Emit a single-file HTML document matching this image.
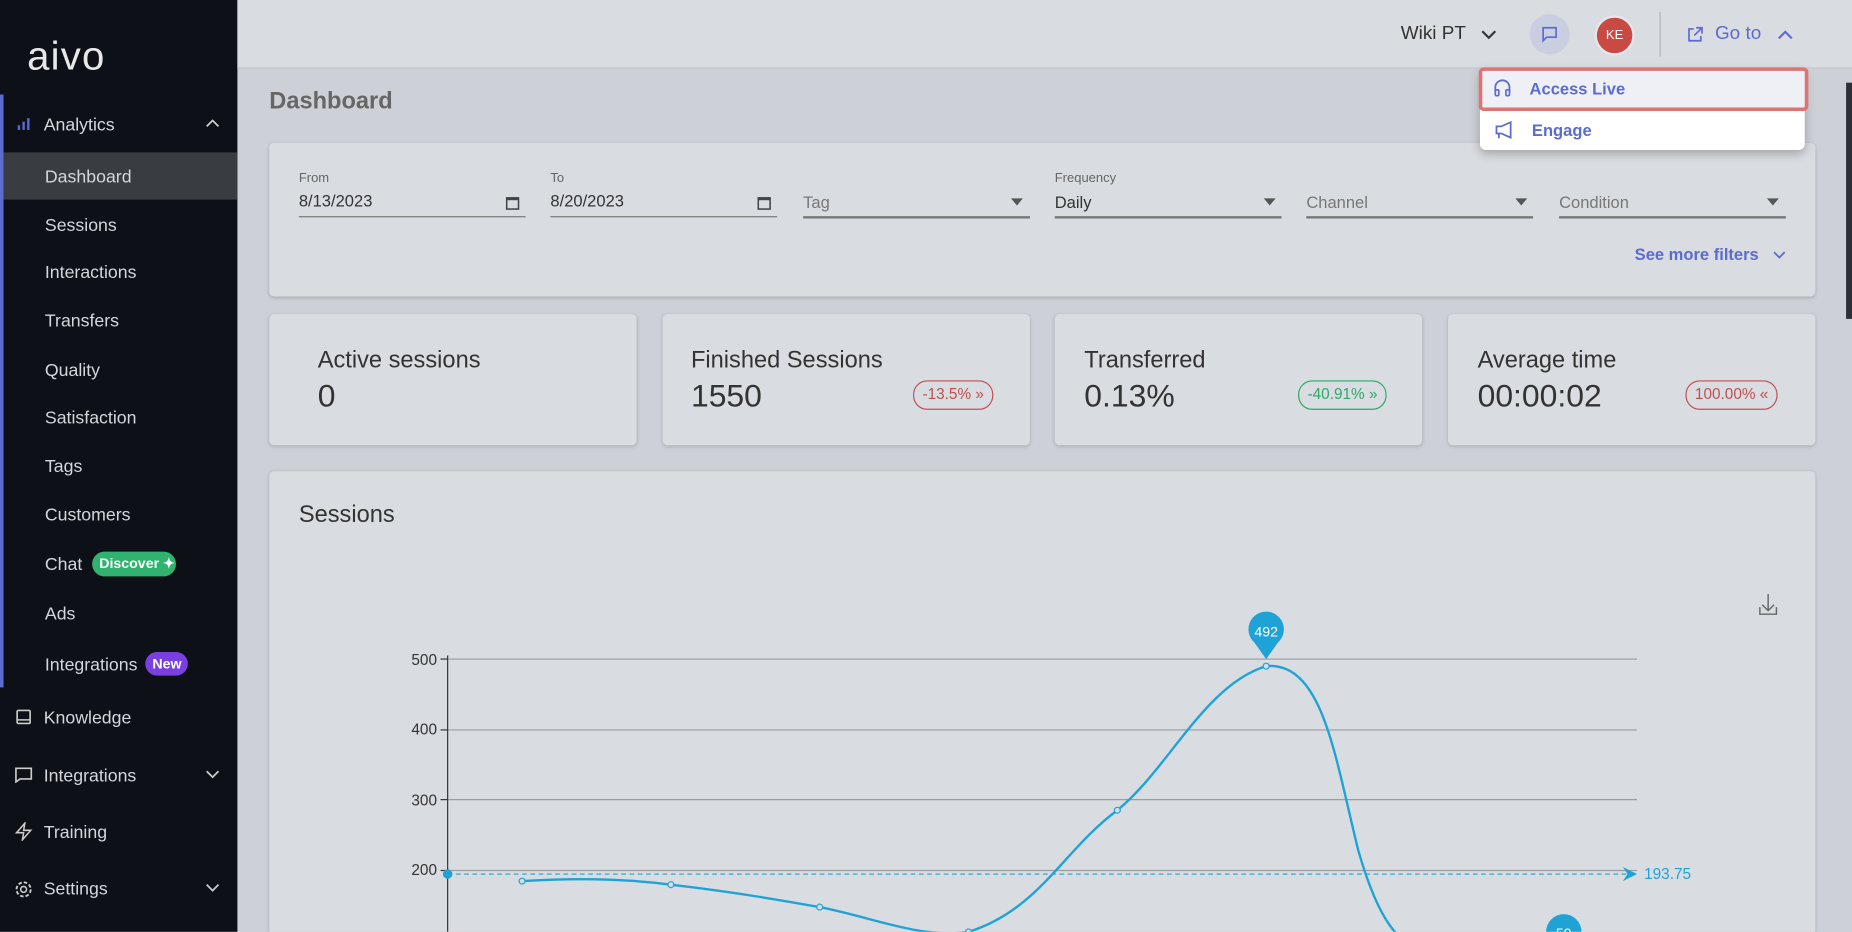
<!DOCTYPE html>
<html><head><meta charset="utf-8"><style>
*{box-sizing:border-box;margin:0;padding:0}
html,body{width:1852px;height:932px;overflow:hidden;background:#cdd1d7;font-family:"Liberation Sans",sans-serif}
#w{position:absolute;left:0;top:0;width:1568px;height:789px;transform:scale(1.18112);transform-origin:0 0;overflow:hidden;background:#cdd1d7}
.a{position:absolute}
#sb{left:0;top:0;width:201px;height:789px;background:#0d1117;color:#d4d6da}
.si{position:absolute;left:38px;font-size:15px;color:#d4d6da;transform:translateY(-50%)}
.mi{position:absolute;left:37px;font-size:15px;color:#d4d6da;transform:translateY(-50%)}
.ic{position:absolute;left:12px;transform:translateY(-50%)}
.card{position:absolute;background:#d9dce0;border-radius:4px;box-shadow:0 1px 3px rgba(0,0,0,.18)}
.fl{position:absolute;font-size:11px;color:#666}
.fv{position:absolute;font-size:14px;color:#333}
.fu{position:absolute;height:1px;background:#777}
.st{position:absolute;font-size:20px;color:#333}
.sv{position:absolute;font-size:27px;color:#333;font-weight:300}
.bd{position:absolute;font-size:13px;border:1px solid;border-radius:12px;padding:3px 7px;height:25px}
</style></head><body><div id="w">
<div id="sb" class="a">
 <div class="a" style="left:23px;top:29px;font-size:34px;color:#e8e8e8;letter-spacing:1px">aivo</div>
 <div class="a" style="left:0;top:80px;width:3px;height:502px;background:#5b6bd0"></div>
 <svg class="a" style="left:14px;top:99px" width="12" height="12"><rect x="1" y="7" width="2" height="4" fill="#5b6bd0"/><rect x="5" y="4" width="2" height="7" fill="#5b6bd0"/><rect x="9" y="1" width="2" height="10" fill="#5b6bd0"/></svg>
 <div class="mi" style="top:106px">Analytics</div>
 <svg class="a" style="left:174px;top:101px" width="12" height="8"><path d="M1 6L6 1L11 6" stroke="#ccc" fill="none" stroke-width="1.5"/></svg>
 <div class="a" style="left:3px;top:129px;width:198px;height:40px;background:#393c41"></div>
 <div class="si" style="top:150px">Dashboard</div>
 <div class="si" style="top:191px">Sessions</div>
 <div class="si" style="top:231px">Interactions</div>
 <div class="si" style="top:272px">Transfers</div>
 <div class="si" style="top:314px">Quality</div>
 <div class="si" style="top:354px">Satisfaction</div>
 <div class="si" style="top:395px">Tags</div>
 <div class="si" style="top:436px">Customers</div>
 <div class="si" style="top:478px">Chat</div>
 <div class="a" style="left:78px;top:467px;width:71px;height:21px;background:#2fb36e;border-radius:11px;color:#fff;font-size:12px;font-weight:bold;padding:3px 0 0 6px">Discover ✦</div>
 <div class="si" style="top:520px">Ads</div>
 <div class="si" style="top:563px">Integrations</div>
 <div class="a" style="left:123px;top:552px;width:36px;height:20px;background:#7a3fe0;border-radius:10px;color:#fff;font-size:12px;font-weight:bold;padding:3px 0 0 6px">New</div>
 <svg class="a" style="left:13px;top:600px" width="14" height="14"><rect x="1.5" y="1.5" width="11" height="11" rx="1" stroke="#ccc" fill="none" stroke-width="1.4"/><line x1="1.5" y1="9.5" x2="12.5" y2="9.5" stroke="#ccc" stroke-width="1.2"/></svg>
 <div class="mi" style="top:608px">Knowledge</div>
 <svg class="a" style="left:12px;top:649px" width="16" height="14"><path d="M1.5 1.5H14.5V10.5H5L1.5 13Z" stroke="#ccc" fill="none" stroke-width="1.4"/></svg>
 <div class="mi" style="top:657px">Integrations</div>
 <svg class="a" style="left:174px;top:652px" width="12" height="8"><path d="M1 1L6 6L11 1" stroke="#ccc" fill="none" stroke-width="1.5"/></svg>
 <svg class="a" style="left:12px;top:696px" width="16" height="16"><path d="M9 1L2 9H8L7 15L14 7H8Z" stroke="#ccc" fill="none" stroke-width="1.3"/></svg>
 <div class="mi" style="top:705px">Training</div>
 <svg class="a" style="left:12px;top:745px" width="16" height="16"><circle cx="8" cy="8" r="2.5" stroke="#ccc" fill="none" stroke-width="1.3"/><circle cx="8" cy="8" r="6" stroke="#ccc" fill="none" stroke-width="1.6" stroke-dasharray="3 1.7"/></svg>
 <div class="mi" style="top:753px">Settings</div>
 <svg class="a" style="left:174px;top:748px" width="12" height="8"><path d="M1 1L6 6L11 1" stroke="#ccc" fill="none" stroke-width="1.5"/></svg>
</div>
<!-- header -->
<div class="a" style="left:201px;top:0;width:1367px;height:58px;background:#d9dce0;border-bottom:1px solid #c5c8cd"></div>
<div class="a" style="left:1186px;top:20px;font-size:16px;color:#333">Wiki PT</div>
<svg class="a" style="left:1254px;top:25px" width="13" height="9"><path d="M1 1.5L6.5 7L12 1.5" stroke="#333" fill="none" stroke-width="1.8"/></svg>
<div class="a" style="left:1295px;top:12px;width:34px;height:34px;border-radius:50%;background:#c9cee0"></div>
<svg class="a" style="left:1305px;top:22px" width="14" height="14"><path d="M1.5 1.5H12.5V9.5H4.5L1.5 12.5Z" stroke="#5b6bd0" fill="none" stroke-width="1.4"/></svg>
<div class="a" style="left:1350px;top:13px;width:34px;height:34px;border-radius:50%;background:#c94a42;border:2px solid #e6e6ee;color:#fff;font-size:11px;text-align:center;line-height:30px">KE</div>
<div class="a" style="left:1405px;top:10px;width:1px;height:38px;background:#b0b3b8"></div>
<svg class="a" style="left:1428px;top:22px" width="14" height="14"><path d="M6 2.5H2V12.5H12V8.5M8 1.5H13V6.5M13 1.5L6.5 8" stroke="#5b6bd0" fill="none" stroke-width="1.4"/></svg>
<div class="a" style="left:1452px;top:20px;font-size:16px;color:#5b6bd0">Go to</div>
<svg class="a" style="left:1505px;top:25px" width="13" height="9"><path d="M1 7.5L6.5 2L12 7.5" stroke="#5b6bd0" fill="none" stroke-width="1.8"/></svg>
<!-- dashboard title -->
<div class="a" style="left:228px;top:75px;font-size:20px;font-weight:bold;color:#666">Dashboard</div>
<!-- filter card -->
<div class="card" style="left:228px;top:121px;width:1309px;height:130px">
 <div class="fl" style="left:25px;top:24px">From</div><div class="fv" style="left:25px;top:41px">8/13/2023</div>
 <svg class="a" style="left:200px;top:45px" width="12" height="12"><rect x="1" y="1.5" width="10" height="9.5" stroke="#444" fill="none" stroke-width="1.3"/><rect x="1" y="1.5" width="10" height="2" fill="#444"/></svg>
 <div class="fu" style="left:25px;top:62px;width:192px"></div>
 <div class="fl" style="left:238px;top:24px">To</div><div class="fv" style="left:238px;top:41px">8/20/2023</div>
 <svg class="a" style="left:413px;top:45px" width="12" height="12"><rect x="1" y="1.5" width="10" height="9.5" stroke="#444" fill="none" stroke-width="1.3"/><rect x="1" y="1.5" width="10" height="2" fill="#444"/></svg>
 <div class="fu" style="left:238px;top:62px;width:192px"></div>
 <div class="fv" style="left:452px;top:42px;color:#777">Tag</div>
 <div class="a" style="left:628px;top:47px;border:5px solid transparent;border-top:6px solid #555"></div>
 <div class="fu" style="left:452px;top:62px;width:192px;height:2px"></div>
 <div class="fl" style="left:665px;top:24px">Frequency</div><div class="fv" style="left:665px;top:42px">Daily</div>
 <div class="a" style="left:842px;top:47px;border:5px solid transparent;border-top:6px solid #555"></div>
 <div class="fu" style="left:665px;top:62px;width:192px;height:2px"></div>
 <div class="fv" style="left:878px;top:42px;color:#777">Channel</div>
 <div class="a" style="left:1055px;top:47px;border:5px solid transparent;border-top:6px solid #555"></div>
 <div class="fu" style="left:878px;top:62px;width:192px;height:2px"></div>
 <div class="fv" style="left:1092px;top:42px;color:#777">Condition</div>
 <div class="a" style="left:1268px;top:47px;border:5px solid transparent;border-top:6px solid #555"></div>
 <div class="fu" style="left:1092px;top:62px;width:192px;height:2px"></div>
 <div class="a" style="left:1156px;top:86px;font-size:14px;font-weight:bold;color:#5b6bd0">See more filters</div>
 <svg class="a" style="left:1273px;top:91px" width="11" height="8"><path d="M1 1.5L5.5 6L10 1.5" stroke="#5b6bd0" fill="none" stroke-width="1.5"/></svg>
</div>
<!-- stat cards -->
<div class="card" style="left:228px;top:266px;width:311px;height:111px"><div class="st" style="left:41px;top:28px">Active sessions</div><div class="sv" style="left:41px;top:54px">0</div></div>
<div class="card" style="left:561px;top:266px;width:311px;height:111px"><div class="st" style="left:24px;top:28px">Finished Sessions</div><div class="sv" style="left:24px;top:54px">1550</div><div class="bd" style="left:212px;top:56px;color:#c05050;border-color:#c05050">-13.5% »</div></div>
<div class="card" style="left:893px;top:266px;width:311px;height:111px"><div class="st" style="left:25px;top:28px">Transferred</div><div class="sv" style="left:25px;top:54px">0.13%</div><div class="bd" style="left:206px;top:56px;color:#2fa868;border-color:#2fa868">-40.91% »</div></div>
<div class="card" style="left:1226px;top:266px;width:311px;height:111px"><div class="st" style="left:25px;top:28px">Average time</div><div class="sv" style="left:25px;top:54px">00:00:02</div><div class="bd" style="left:201px;top:56px;color:#c05050;border-color:#c05050">100.00% «</div></div>
<!-- sessions chart -->
<div class="card" style="left:228px;top:399px;width:1309px;height:420px"><div class="a" style="left:25px;top:26px;font-size:20px;color:#333">Sessions</div></div>
<svg class="a" style="left:0;top:0" width="1568" height="789">
 <g stroke="#9a9da2" stroke-width="1"><line x1="379" y1="558" x2="1386" y2="558"/><line x1="379" y1="618" x2="1386" y2="618"/><line x1="379" y1="677" x2="1386" y2="677"/><line x1="379" y1="737" x2="1386" y2="737"/></g>
 <line x1="379" y1="555" x2="379" y2="789" stroke="#333" stroke-width="1"/>
 <g stroke="#333"><line x1="373" y1="558" x2="379" y2="558"/><line x1="373" y1="618" x2="379" y2="618"/><line x1="373" y1="677" x2="379" y2="677"/><line x1="373" y1="737" x2="379" y2="737"/></g>
 <g font-family="Liberation Sans" font-size="13" fill="#333" text-anchor="end"><text x="370" y="563">500</text><text x="370" y="622">400</text><text x="370" y="682">300</text><text x="370" y="741">200</text></g>
 <line x1="379" y1="740" x2="1380" y2="740" stroke="#1fa3d6" stroke-width="1" stroke-dasharray="4 3"/>
 <path d="M1374 734L1386 740L1374 746L1378 740Z" fill="#1fa3d6"/>
 <text x="1392" y="744" font-family="Liberation Sans" font-size="13" fill="#1fa3d6">193.75</text>
 <circle cx="379" cy="740" r="4" fill="#1fa3d6"/>
 <path d="M442 746C490 743 530 744 568 749C620 755 660 762 694 768C740 777 780 795 820 789C880 770 900 720 946 686C990 650 1020 580 1072 564C1120 560 1130 640 1150 720C1170 790 1190 800 1200 800" stroke="#1fa3d6" fill="none" stroke-width="2"/>
 <g fill="#d9dce0" stroke="#1fa3d6" stroke-width="1"><circle cx="442" cy="746" r="2.5"/><circle cx="568" cy="749" r="2.5"/><circle cx="694" cy="768" r="2.5"/><circle cx="820" cy="789" r="2.5"/><circle cx="946" cy="686" r="2.5"/><circle cx="1072" cy="564" r="2.5"/></g>
 <path d="M1072 558L1062 544A15 15 0 1 1 1082 544Z" fill="#1fa3d6"/>
 <text x="1072" y="539" font-family="Liberation Sans" font-size="12" fill="#fff" text-anchor="middle">492</text>
 <circle cx="1324" cy="789" r="15" fill="#1fa3d6"/>
 <text x="1324" y="794" font-family="Liberation Sans" font-size="12" fill="#fff" text-anchor="middle">59</text>
 <path d="M1497 503V517M1492 512L1497 517L1502 512M1490 514V520H1504V514" stroke="#666" fill="none" stroke-width="1.2"/>
</svg>
<!-- scrollbar -->
<div class="a" style="left:1563px;top:70px;width:5px;height:200px;background:#2b2f36"></div>
<!-- dropdown -->
<div class="a" style="left:1253px;top:58px;width:275px;height:69px;background:#fff;border-radius:5px;box-shadow:0 3px 8px rgba(0,0,0,.25)"></div>
<div class="a" style="left:1252px;top:57px;width:279px;height:37px;background:#eef0f6;border:3px solid #df7272;border-radius:4px"></div>
<svg class="a" style="left:1264px;top:67px" width="16" height="16"><path d="M2 11V7A6 6 0 0 1 14 7V11" stroke="#5b6bd0" fill="none" stroke-width="1.5"/><rect x="2" y="9" width="3" height="5" rx="1" stroke="#5b6bd0" fill="none" stroke-width="1.4"/><rect x="11" y="9" width="3" height="5" rx="1" stroke="#5b6bd0" fill="none" stroke-width="1.4"/></svg>
<div class="a" style="left:1295px;top:67px;font-size:14px;font-weight:bold;color:#5b6bd0">Access Live</div>
<svg class="a" style="left:1265px;top:102px" width="16" height="16"><path d="M2 5H6L14 1.5V14.5L6 11H2Z" stroke="#5b6bd0" fill="none" stroke-width="1.5"/><path d="M4 11V15" stroke="#5b6bd0" stroke-width="1.5"/></svg>
<div class="a" style="left:1297px;top:102px;font-size:14px;font-weight:bold;color:#5b6bd0">Engage</div>
</div></body></html>
